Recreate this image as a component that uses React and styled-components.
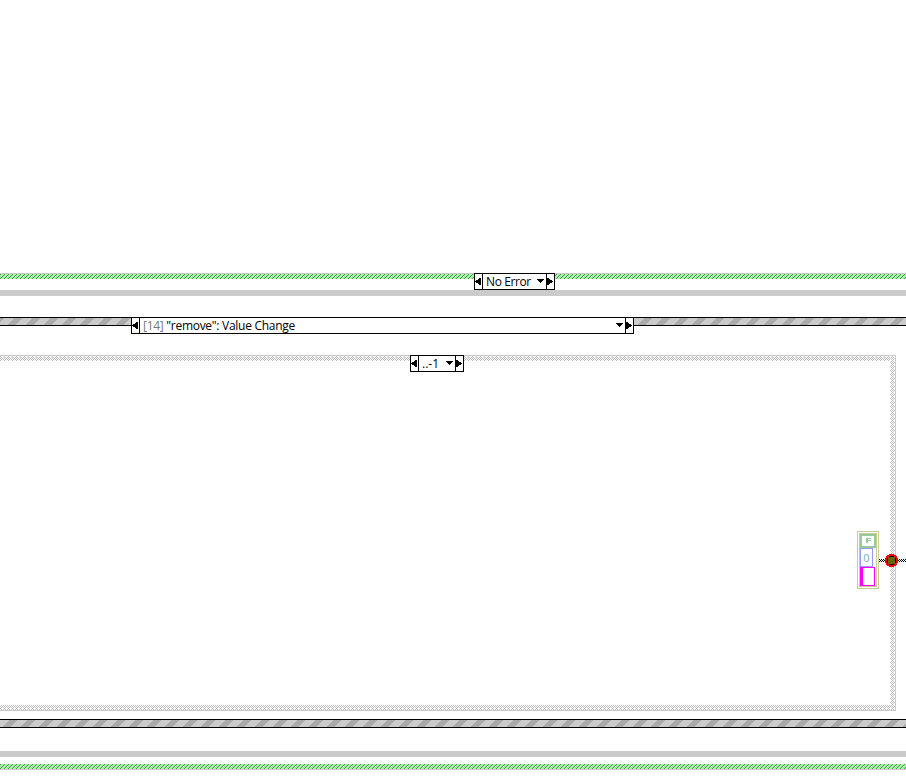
import React from "react";
import styled, { createGlobalStyle, css } from "styled-components";

/* Builds a crisp repeating tile from rows of palette keys. */
const tile = (rows, palette) => {
  const w = rows[0].length;
  const h = rows.length;
  let cells = "";
  rows.forEach((row, y) =>
    [...row].forEach((key, x) => {
      if (palette[key]) {
        cells += `<rect x='${x}' y='${y}' width='1' height='1' fill='${palette[key]}'/>`;
      }
    })
  );
  const svg = `<svg xmlns='http://www.w3.org/2000/svg' width='${w}' height='${h}' shape-rendering='crispEdges'>${cells}</svg>`;
  return `url("data:image/svg+xml,${encodeURIComponent(svg).replace(/'/g, "%27")}")`;
};

const diagonal = (width, height, start, thickness) =>
  Array.from({ length: height }, (_, y) =>
    Array.from({ length: width }, (_, x) =>
      (((x + y - start) % width) + width) % width < thickness ? "d" : "l"
    ).join("")
  );

const greenHatch = tile(diagonal(4, 4, 0, 1), { d: "#787878", l: "#98ff98" });
const upperGreyHatch = tile(diagonal(18, 7, 14, 8), { d: "#aaaaaa", l: "#cbcbcb" });
const lowerGreyHatch = tile(diagonal(18, 7, 9, 8), { d: "#aaaaaa", l: "#cbcbcb" });
const checker = tile(["lwww", "wlwl", "lwlw", "wlwl"], { l: "#c0c0c0", w: "#ffffff" });
const wireDots = tile(["bw", "wb", "bw"], { b: "#000000" });

const GlobalStyle = createGlobalStyle`
  * { box-sizing: border-box; }
  body { margin: 0; background: #fff; overflow: hidden; }
`;

const Diagram = styled.main`
  display: flex;
  flex-direction: column;
  width: 906px;
  height: 778px;
  padding-top: 273px;
  background: #fff;
  font: 12px/15px "Open Sans", "Noto Sans", sans-serif;
  color: #000;
  overflow: hidden;
`;

const ErrorBorder = styled.div`
  position: relative;
  flex: none;
  height: 6px;
  margin-top: ${(p) => p.$gap ?? 0}px;
  background: ${greenHatch};
  ${(p) =>
    p.$bottom
      ? css`border-bottom: 1px solid #cbcbcb;`
      : css`border-top: 1px solid #cbcbcb;`}
`;

const LoopBorder = styled.div`
  flex: none;
  height: 6px;
  margin-top: ${(p) => p.$gap}px;
  background: #cbcbcb;
`;

const EventBorder = styled.div`
  position: relative;
  flex: none;
  height: 9px;
  margin-top: ${(p) => p.$gap ?? 0}px;
  border: solid #000;
  border-width: 1px 0;
  background: ${(p) => (p.$lower ? lowerGreyHatch : upperGreyHatch)};
`;

const EventBody = styled.section`
  flex: none;
  height: 393px;
  padding: 29px 10px 8px 0;
`;

const CaseFrame = styled.div`
  position: relative;
  display: flex;
  height: 356px;
  padding: 5px;
  padding-left: 0;
  border: 1px solid #cbcbcb;
  border-left: 0;
  background: ${checker};
`;

const CaseBody = styled.div`
  display: flex;
  flex: 1;
  justify-content: flex-end;
  align-items: flex-start;
  padding: 170px 11px 0 0;
  background: #fff;
`;

const SelectorBox = styled.div`
  position: absolute;
  z-index: 2;
  top: -1px;
  left: ${(p) => p.$left}px;
  width: ${(p) => p.$width}px;
  height: 17px;
  display: flex;
  border: 1px solid #000;
  background: #fff;
`;

const StepButton = styled.span`
  flex: none;
  width: 8px;
  height: 15px;
  border: 0 solid #000;
  ${(p) => (p.$next ? "border-left-width: 1px;" : "border-right-width: 1px;")}
  svg { display: block; }
`;

const Label = styled.span`
  flex: 1;
  padding-left: 3px;
  line-height: 16px;
  white-space: pre;
  letter-spacing: ${(p) => p.$spacing}px;
`;

const EventIndex = styled.span`
  color: #777;
`;

const MenuArrow = styled.svg`
  flex: none;
  display: block;
  width: 9px;
  height: 15px;
  margin-right: 1px;
`;

const Cluster = styled.div`
  flex: none;
  width: 22px;
  height: 58px;
  padding: 1px;
  border: 1px solid #cbcb98;
  background: #fff;
`;

const ClusterBody = styled.div`
  display: flex;
  flex-direction: column;
  width: 18px;
  height: 54px;
  border: 1px solid #cbcb98;
  background: #fff;
`;

const BooleanConstant = styled.div`
  width: 16px;
  height: 14px;
  border: 2px solid #98cb98;
  svg { display: block; margin: 2px 0 0 4px; }
`;

const NumericConstant = styled.div`
  width: 13px;
  height: 19px;
  border: 1px solid #9898ff;
  color: #79a9c8;
  font: 11px/17px "Open Sans", sans-serif;
  text-align: center;
`;

const StringConstant = styled.div`
  width: 15px;
  height: 19px;
  border: 1px solid #ff00ff;
  border-left-width: 3px;
`;

const Wire = styled.span`
  position: absolute;
  left: 879px;
  top: 203px;
  width: 27px;
  height: 3px;
  background: ${wireDots};
`;

const Tunnel = styled.svg`
  position: absolute;
  left: 885px;
  top: 198px;
  width: 13px;
  height: 13px;
`;

function Selector({ left, width, spacing, children }) {
  return (
    <SelectorBox $left={left} $width={width}>
      <StepButton>
        <svg width="7" height="15" shapeRendering="crispEdges">
          <path d="M0 7h1v-1h2v-1h1v-1h2v7h-2v-1h-1v-1h-2v-1h-1z" />
        </svg>
      </StepButton>
      <Label $spacing={spacing}>{children}</Label>
      <MenuArrow shapeRendering="crispEdges">
        <path d="M1 5h7v1h-1v1h-1v1h-1v1h-1v-1h-1v-1h-1v-1h-1z" />
      </MenuArrow>
      <StepButton $next>
        <svg width="7" height="15" shapeRendering="crispEdges">
          <path d="M0 4h2v1h1v1h2v1h1v1h-1v1h-2v1h-1v1h-2z" />
        </svg>
      </StepButton>
    </SelectorBox>
  );
}

export default function App() {
  return (
    <>
      <GlobalStyle />
      <Diagram>
        <ErrorBorder>
          <Selector left={474} width={81} spacing={-0.4}>No Error</Selector>
        </ErrorBorder>
        <LoopBorder $gap={11} />
        <EventBorder $gap={21}>
          <Selector left={131} width={503} spacing={-0.28}>
            <EventIndex>[14]</EventIndex> "remove": Value Change
          </Selector>
        </EventBorder>
        <EventBody>
          <CaseFrame>
            <Selector left={410} width={54} spacing={0}>..-1</Selector>
            <CaseBody>
              <Cluster>
                <ClusterBody>
                  <BooleanConstant>
                    <svg width="6" height="6" shapeRendering="crispEdges">
                      <path d="M0 0h5v1h-3v1h3v1h-3v2h-2z" fill="#98cb98" />
                    </svg>
                  </BooleanConstant>
                  <NumericConstant>0</NumericConstant>
                  <StringConstant />
                </ClusterBody>
              </Cluster>
            </CaseBody>
            <Wire />
            <Tunnel viewBox="0 0 13 13" shapeRendering="crispEdges">
              <path d="M4 0h5v1h2v1h1v2h1v5h-1v2h-1v1h-2v1h-5v-1h-2v-1h-1v-2h-1v-5h1v-2h1v-1h2z" fill="#f00" />
              <path d="M4 2h5v1h1v1h1v5h-1v1h-1v1h-5v-1h-1v-1h-1v-5h1v-1h1z" fill="#000" />
              <path d="M3 3h7v7h-7z" fill="#656500" />
            </Tunnel>
          </CaseFrame>
        </EventBody>
        <EventBorder $lower />
        <LoopBorder $gap={23} />
        <ErrorBorder $gap={7} $bottom />
      </Diagram>
    </>
  );
}
